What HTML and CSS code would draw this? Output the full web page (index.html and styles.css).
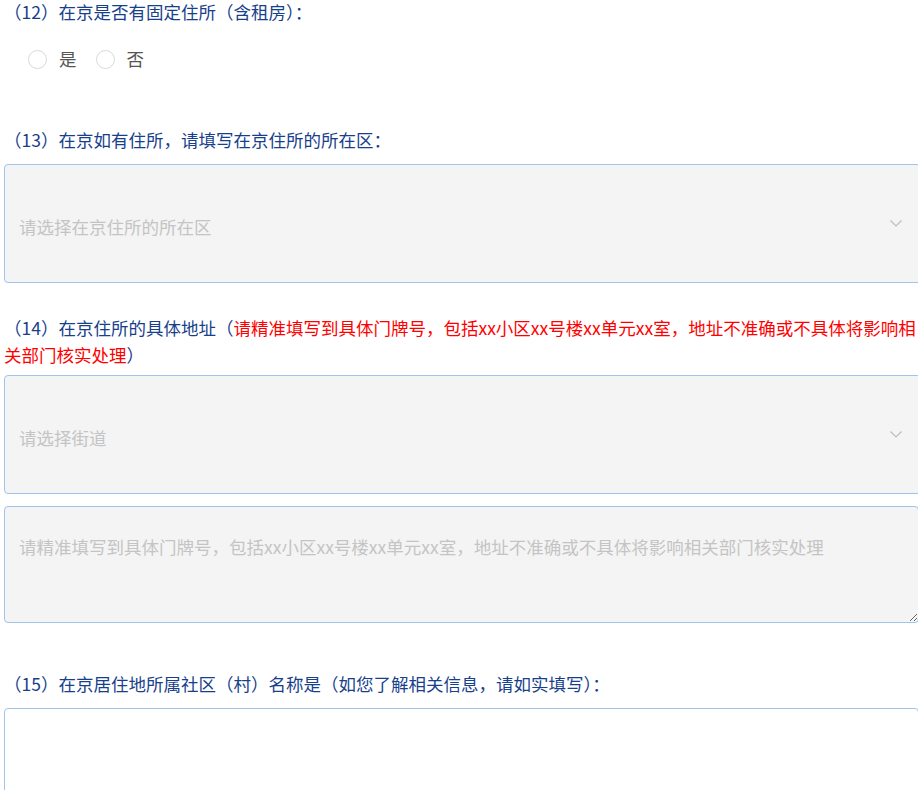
FILE: index.html
```html
<!DOCTYPE html>
<html lang="zh-CN">
<head>
<meta charset="utf-8">
<title>表单</title>
<link rel="stylesheet" href="styles.css">
</head>
<body>
<div class="form">
  <div class="q q12">
    <div class="label">（12）在京是否有固定住所（含租房）：</div>
    <div class="radios">
      <label class="radio"><span class="dot"></span><span class="rtext">是</span></label>
      <label class="radio"><span class="dot"></span><span class="rtext">否</span></label>
    </div>
  </div>

  <div class="q q13">
    <div class="label">（13）在京如有住所，请填写在京住所的所在区：</div>
    <div class="select"><span class="ph">请选择在京住所的所在区</span><span class="chev"><svg width="12" height="7" viewBox="0 0 12 7"><path d="M0.5 0.5 L6 6 L11.5 0.5" fill="none" stroke="#bdbdbd" stroke-width="1.2"/></svg></span></div>
  </div>

  <div class="q q14">
    <div class="label label-nowrap">（14）在京住所的具体地址（<span class="red">请精准填写到具体门牌号，包括xx小区xx号楼xx单元xx室，地址不准确或不具体将影响相<br>关部门核实处理</span>）</div>
    <div class="select"><span class="ph">请选择街道</span><span class="chev"><svg width="12" height="7" viewBox="0 0 12 7"><path d="M0.5 0.5 L6 6 L11.5 0.5" fill="none" stroke="#bdbdbd" stroke-width="1.2"/></svg></span></div>
    <textarea class="area" placeholder="请精准填写到具体门牌号，包括xx小区xx号楼xx单元xx室，地址不准确或不具体将影响相关部门核实处理"></textarea>
  </div>

  <div class="q q15">
    <div class="label">（15）在京居住地所属社区（村）名称是（如您了解相关信息，请如实填写）：</div>
    <textarea class="area area-white"></textarea>
  </div>
</div>
</body>
</html>
```

FILE: styles.css
```css
html, body {
  margin: 0;
  padding: 0;
  background: #fff;
  overflow: hidden;
}
body {
  width: 918px;
  height: 790px;
  font-family: "Microsoft YaHei", "Noto Sans CJK SC", "Noto Sans", sans-serif;
  font-size: 17.5px;
  color: #1a3f8a;
}
.form {
  padding-left: 4px;
}
.label {
  line-height: 27px;
  color: #183f8c;
}
.label-nowrap {
  white-space: nowrap;
}
.red {
  color: #ff0000;
}
.q12 {
  margin-top: -2px;
}
.radios {
  display: flex;
  align-items: center;
  margin-top: 22px;
  padding-left: 24px;
  height: 24px;
}
.radio {
  display: flex;
  align-items: center;
  margin-right: 19px;
}
.dot {
  width: 19px;
  height: 19px;
  box-sizing: border-box;
  border: 1px solid #d9d9d9;
  border-radius: 50%;
  background: #fff;
  margin-right: 12px;
}
.rtext {
  color: #555;
  line-height: 24px;
}
.q13 {
  margin-top: 55px;
}
.select {
  margin-top: 11px;
  width: calc(100% + 3px);
  height: 119px;
  box-sizing: border-box;
  border: 1px solid #a3c3ec;
  border-radius: 4px;
  background: #f4f4f4;
  display: flex;
  align-items: center;
  justify-content: space-between;
  padding: 5px 18px 0 14px;
}
.ph {
  color: #c4c4c4;
}
.chev {
  display: flex;
  align-items: center;
  margin-top: -6px;
}
.q14 {
  margin-top: 31px;
}
.q14 .select {
  margin-top: 7px;
}
.area {
  display: block;
  margin-top: 12px;
  width: calc(100% + 1px);
  height: 117px;
  box-sizing: border-box;
  border: 1px solid #a3c3ec;
  border-radius: 4px;
  background: #f4f4f4;
  font-family: "Microsoft YaHei", "Noto Sans CJK SC", "Noto Sans", sans-serif;
  font-size: 17.5px;
  line-height: 24px;
  padding: 28px 14px 0 14px;
  resize: vertical;
  outline: none;
}
.area::placeholder {
  color: #c4c4c4;
}
.q15 {
  margin-top: 47px;
}
.area-white {
  background: #fff;
  margin-top: 11px;
  height: 120px;
}
```
